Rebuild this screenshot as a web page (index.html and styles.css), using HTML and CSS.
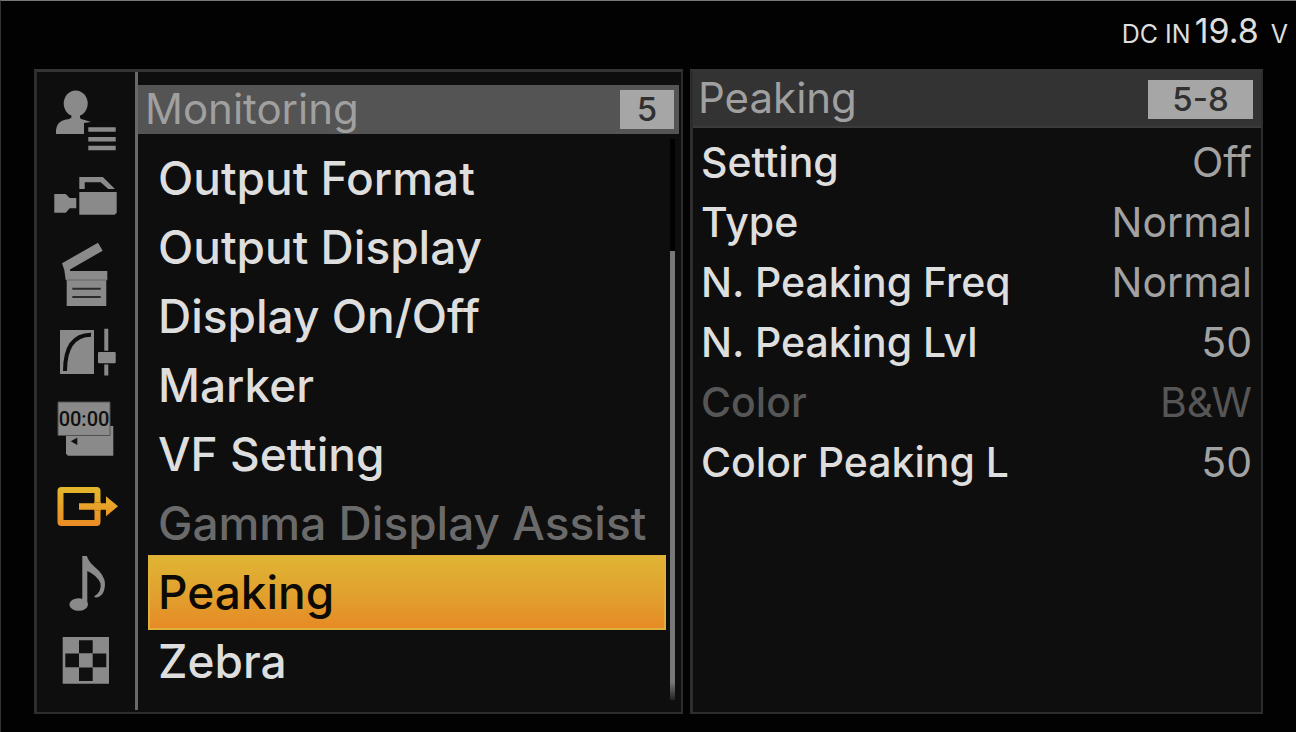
FILE: index.html
```html
<!DOCTYPE html>
<html lang="en">
<head>
    <meta charset="utf-8">
    <meta name="viewport" content="width=device-width, initial-scale=1">
    <title>Monitoring</title>
    <link rel="stylesheet" href="styles.css">
</head>
<body>
    <header class="status">
        <span class="status-small">DC IN</span>
        <span class="status-value">19.8</span>
        <span class="status-small status-unit">V</span>
    </header>

    <main class="panels">
        <section class="panel menu-panel">
            <nav class="tabs">
                <button type="button" class="tab" aria-label="User">
                    <svg viewBox="0 0 98 77">
                        <ellipse cx="38.7" cy="20.5" rx="12" ry="13"/>
                        <path d="M34.500 30h8.500v4q0 2 3 2.500l8 2.500-7 1v11H19v-4q1-9 10-10.500 5.500-.5 5.500-3z"/>
                        <path d="M51.300 44.300h27.400v4.400H51.300zM51.300 54h27.400v4.400H51.300zM51.300 62.800h27.400v4.400H51.300z"/>
                    </svg>
                </button>
                <button type="button" class="tab" aria-label="Shooting">
                    <svg viewBox="0 0 98 77">
                        <path d="M42.300 29V17h23.500L78 29h-6.700l-7.600-6.700h-16V29z"/>
                        <path d="M42.300 32h37.400v20.700l-2 2H42.300z"/>
                        <path d="M17.300 34h11.400l4 4h6.600v10.300h-6.600l-4 4.400H17.300z"/>
                    </svg>
                </button>
                <button type="button" class="tab" aria-label="Project">
                    <svg viewBox="0 0 98 77">
                        <path d="M25 26.300L61 5.700l4.700 8L33 32.500V34h37.300v9h-1v26H29.700V43h-1l-1.400-10z"/>
                        <path class="cut" d="M35.300 51.700h28.400M35.300 60h28.400"/>
                        <path class="shade" d="M29.700 43h39.600"/>
                    </svg>
                </button>
                <button type="button" class="tab" aria-label="Paint/Look">
                    <svg viewBox="0 0 98 77">
                        <path d="M23 16h34v44H23z"/>
                        <path class="curve" d="M28 57C28 34 36 21 54 20.700"/>
                        <path d="M67.300 14.700h4v22h-4zM67.300 50.600h4v11h-4z"/>
                        <rect x="61" y="38" width="17.700" height="11.300" rx="1"/>
                    </svg>
                </button>
                <button type="button" class="tab" aria-label="TC/Media">
                    <svg viewBox="0 0 98 77">
                        <path d="M29 35h47.300v29.700H31l-2-2z"/>
                        <path class="edge" d="M21 11h52v33.500H21z"/>
                        <path class="dark" d="M33.700 50.300l6.600-3.600V54z"/>
                        <text class="dark timecode" x="47" y="35" text-anchor="middle">00:00</text>
                    </svg>
                </button>
                <button type="button" class="tab active" aria-label="Monitoring">
                    <svg viewBox="0 0 98 77">
                        <defs>
                            <linearGradient id="amber" gradientUnits="userSpaceOnUse" x1="0" y1="18" x2="0" y2="58">
                                <stop offset="0" stop-color="#e3b92d"/>
                                <stop offset="1" stop-color="#ec8b25"/>
                            </linearGradient>
                        </defs>
                        <rect class="frame" x="23.500" y="22" width="37" height="33" rx="1"/>
                        <path class="gap" d="M57 34.500h7M57 42.500h7"/>
                        <path class="fill" d="M42 35.300h27v-7l12 10-12 10v-6.600H42z"/>
                    </svg>
                </button>
                <button type="button" class="tab" aria-label="Audio">
                    <svg viewBox="0 0 98 77">
                        <ellipse cx="41.700" cy="59.500" rx="9.300" ry="6.300"/>
                        <path d="M45.300 11h4.500q2 6 8 11 10 8 10.200 17-.5 13-9.500 13.500l-1.500-1q8-5 6.500-13-3-8-13.200-12.500v34h-5z"/>
                    </svg>
                </button>
                <button type="button" class="tab" aria-label="Thumbnail">
                    <svg viewBox="0 0 98 77">
                        <path d="M25.700 15H72v46.700H25.700z"/>
                        <path class="dark" d="M42 18.300h13.700v13H42zM28.300 31.500H42v13.800H28.300zM55.700 31.500h13.600v13.800H55.700zM42 45.500h13.700V59H42z"/>
                    </svg>
                </button>
            </nav>

            <div class="menu">
                <div class="menu-head">
                    <h1 class="title">Monitoring</h1>
                    <span class="badge">5</span>
                </div>
                <div class="menu-body">
                    <div class="menu-list">
                        <button type="button" class="item">Output Format</button>
                        <button type="button" class="item">Output Display</button>
                        <button type="button" class="item">Display On/Off</button>
                        <button type="button" class="item">Marker</button>
                        <button type="button" class="item">VF Setting</button>
                        <button type="button" class="item" disabled>Gamma Display Assist</button>
                        <button type="button" class="item selected">Peaking</button>
                        <button type="button" class="item">Zebra</button>
                    </div>
                    <div class="scrollbar"><div class="thumb"></div></div>
                </div>
            </div>
        </section>

        <section class="panel detail-panel">
            <div class="detail-head">
                <h2 class="title">Peaking</h2>
                <span class="badge badge-wide">5-8</span>
            </div>
            <div class="settings">
                <button type="button" class="setting"><span>Setting</span><span class="value">Off</span></button>
                <button type="button" class="setting"><span>Type</span><span class="value">Normal</span></button>
                <button type="button" class="setting"><span>N. Peaking Freq</span><span class="value">Normal</span></button>
                <button type="button" class="setting"><span>N. Peaking Lvl</span><span class="value">50</span></button>
                <button type="button" class="setting" disabled><span>Color</span><span class="value">B&amp;W</span></button>
                <button type="button" class="setting"><span>Color Peaking L</span><span class="value">50</span></button>
            </div>
        </section>
    </main>
</body>
</html>
```

FILE: styles.css
```css
* {
    box-sizing: border-box;
}
body {
    display: flex;
    flex-direction: column;
    min-height: 100vh;
    margin: 0;
    border-top: 1px solid #777;
    border-left: 1px solid #333;
    background-color: #020203;
    color: #dedede;
    font-family: Inter, "Liberation Sans", sans-serif;
}
button {
    margin: 0;
    padding: 0;
    border: 0;
    background: none;
    color: inherit;
    font: inherit;
    text-align: left;
}

/* power status */
.status {
    display: flex;
    justify-content: flex-end;
    align-items: baseline;
    gap: 4px;
    height: 68px;
    padding: 8px 8px 0 0;
    line-height: 44px;
}
.status-small {
    font-size: 25px;
}
.status-value {
    font-size: 34px;
}
.status-unit {
    padding-left: 8px;
}

.panels {
    flex: 1;
    display: grid;
    grid-template-columns: 649fr 573fr;
    gap: 7px;
    padding: 0 33px 18px;
}
.panel {
    border: 3px solid #2d2d2d;
    border-top-color: #343434;
    border-right-width: 2px;
    border-bottom-width: 2px;
    background-color: #0e0e0e;
}
.menu-panel {
    display: flex;
}

/* category icons */
.tabs {
    display: flex;
    flex-direction: column;
    width: 101px;
    margin-bottom: 2px;
    padding-top: 11px;
    border-right: 3px solid #696969;
}
.tab {
    height: 77px;
}
.tab svg {
    display: block;
    width: 98px;
    height: 77px;
    fill: #8a8a8a;
}
.tab .dark {
    fill: #101010;
}
.tab .cut {
    stroke: #2c2c2c;
    stroke-width: 2;
}
.tab .shade {
    stroke: #777;
    stroke-width: 2;
}
.tab .curve {
    fill: none;
    stroke: #0e0e0e;
    stroke-width: 4;
}
.tab .edge {
    stroke: #505050;
    stroke-width: 1;
}
.tab .frame {
    fill: none;
    stroke: url(#amber);
    stroke-width: 6;
}
.tab .gap {
    stroke: #c98220;
    stroke-width: 1;
}
.tab .fill {
    fill: url(#amber);
}
.timecode {
    font-family: Roboto, "Liberation Sans", sans-serif;
    font-size: 20px;
    font-weight: 500;
}

/* menu list */
.menu {
    flex: 1;
    display: flex;
    flex-direction: column;
    padding: 13px 2px 12px 0;
}
.menu-head {
    display: flex;
    justify-content: space-between;
    align-items: center;
    height: 49px;
    padding: 0 5px 0 7px;
    background-color: #545454;
}
.title {
    margin: 0;
    padding-bottom: 2px;
    color: #a0a0a0;
    font-size: 42px;
    font-weight: normal;
    line-height: 46px;
}
.badge {
    width: 54px;
    background-color: #a6a6a6;
    color: #303030;
    font-size: 33px;
    font-weight: 500;
    line-height: 39px;
    text-align: center;
}
.badge-wide {
    width: 105px;
}
.menu-body {
    flex: 1;
    display: flex;
    justify-content: space-between;
    padding: 5px 4px 0 10px;
}
.menu-list {
    flex: 1;
    display: flex;
    flex-direction: column;
    padding-top: 5px;
}
.item {
    height: 69px;
    padding-left: 10px;
    font-size: 46px;
    font-weight: 500;
    line-height: 69px;
}
.item:disabled {
    color: #6a6a6a;
}
.item.selected {
    height: 75px;
    margin: -3px 0;
    border: 2px solid #dfb13a;
    padding-left: 8px;
    background-image: linear-gradient(#e0b434, #e1a02e 55%, #e78a26);
    color: #0d0a05;
    line-height: 71px;
}
.scrollbar {
    display: flex;
    width: 5px;
    margin-left: 4px;
    background-color: #020202;
}
.thumb {
    width: 5px;
    height: 80%;
    align-self: flex-end;
    background-image: linear-gradient(#787878 96%, #222);
}

/* settings list */
.detail-head {
    display: flex;
    justify-content: space-between;
    align-items: center;
    height: 56px;
    padding: 0 8px 0 5px;
    border-bottom: 2px solid #3c3c3c;
    background-color: #333;
}
.settings {
    padding: 4px 9px 0 8px;
}
.setting {
    display: flex;
    justify-content: space-between;
    width: 100%;
    font-size: 41px;
    font-weight: 500;
    line-height: 60px;
}
.value {
    color: #a2a2a2;
    font-weight: normal;
}
.setting:disabled,
.setting:disabled .value {
    color: #565656;
}
```
